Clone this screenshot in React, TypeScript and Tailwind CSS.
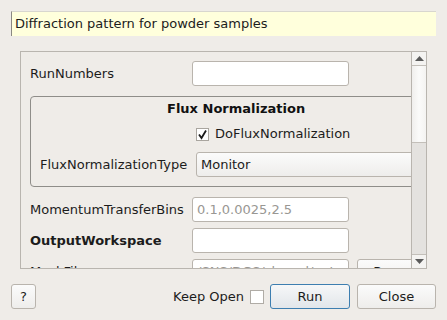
import React from "react";

const font = { fontFamily: '"DejaVu Sans", "Noto Sans", sans-serif' };

function Input({ placeholder }: { placeholder?: string }) {
  return (
    <div className="h-[25px] w-[157px] shrink-0 rounded-[3px] border border-[#b9b4ad] bg-white px-[4px] flex items-center text-[13px] text-[#999793] overflow-hidden whitespace-nowrap">
      {placeholder}
    </div>
  );
}

function Row({ label, bold, children }: { label: string; bold?: boolean; children: React.ReactNode }) {
  return (
    <div className="flex items-center h-[25px]">
      <div className={`w-[162px] shrink-0 text-[13px] text-[#1c1c1c] ${bold ? "font-bold" : ""}`}>{label}</div>
      {children}
    </div>
  );
}

export default function App() {
  return (
    <div style={font} className="w-[447px] h-[320px] bg-[#efece8] relative overflow-hidden text-[#1c1c1c]">
      <div className="pt-[11px] px-[11px]">
        <div className="h-[25px] w-[425px] bg-[#ffffdc] border-l border-l-[#8a8883] border-t border-t-[#d8d6cf] flex items-center pl-[3px] text-[13px]">
          Diffraction pattern for powder samples
        </div>
      </div>
      <div className="mt-[15px] ml-[20px] w-[407px] h-[218px] border border-[#b9b5af] flex overflow-hidden">
        <div className="w-[391px] h-full overflow-hidden">
          <div className="w-[460px] pl-[9px] pt-[9px] flex flex-col">
            <Row label="RunNumbers"><Input /></Row>
            <div className="mt-[10px] w-[417px] h-[91px] border border-[#8f8d89] rounded-[4px] flex flex-col">
              <div className="pl-[136px] pt-[4px] h-[20px] text-[13px] font-bold leading-[16px] text-[#111]">Flux Normalization</div>
              <div className="mt-[10px] ml-[165px] flex items-center h-[14px]">
                <div className="w-[13px] h-[13px] border border-[#a9a59f] bg-white flex items-center justify-center">
                  <svg width="11" height="11" viewBox="0 0 11 11"><path d="M2 5.5 L4.5 9 L9 1.5" stroke="#1a1a1a" strokeWidth="1.8" fill="none" /></svg>
                </div>
                <span className="ml-[6px] text-[13px]">DoFluxNormalization</span>
              </div>
              <div className="mt-[11px] ml-[9px] flex items-center h-[25px]">
                <div className="w-[156px] shrink-0 text-[13px]">FluxNormalizationType</div>
                <div className="h-[25px] w-[240px] rounded-[3px] border border-[#b9b4ad] bg-gradient-to-b from-[#fbfbfb] to-[#eeedeb] flex items-center pl-[4px] text-[13px]">Monitor</div>
              </div>
            </div>
            <div className="mt-[10px] flex flex-col gap-[6px]">
              <Row label="MomentumTransferBins"><Input placeholder="0.1,0.0025,2.5" /></Row>
              <Row label="OutputWorkspace" bold><Input /></Row>
              <Row label="MaskFile">
                <Input placeholder="/SNS/DGS/shared/autoreduce/mask.nxs" />
                <div className="ml-[8px] h-[25px] w-[80px] shrink-0 rounded-[3px] border border-[#b9b4ad] bg-gradient-to-b from-[#fbfbfb] to-[#eeedeb] flex items-center justify-center text-[13px]">Browse</div>
              </Row>
            </div>
          </div>
        </div>
        <div className="w-[15px] h-full border-l border-[#b9b5af] flex flex-col bg-[#e4e2df]">
          <div className="h-[14px] border-b border-[#c3bfb9] bg-[#f4f3f1] flex items-center justify-center">
            <svg width="9" height="5" viewBox="0 0 9 5"><path d="M0 5 L4.5 0 L9 5 Z" fill="#5a5a5a" /></svg>
          </div>
          <div className="h-[77px] border-b border-[#c3bfb9] bg-gradient-to-r from-[#f0efed] via-[#fbfbfa] to-[#f4f3f1]" />
          <div className="flex-1" />
          <div className="h-[14px] border-t border-[#c3bfb9] bg-[#f4f3f1] flex items-center justify-center">
            <svg width="9" height="5" viewBox="0 0 9 5"><path d="M0 0 L4.5 5 L9 0 Z" fill="#5a5a5a" /></svg>
          </div>
        </div>
      </div>
      <div className="mt-[15px] px-[11px] flex items-center h-[25px]">
        <div className="w-[25px] h-[25px] rounded-[3px] border border-[#b9b4ad] bg-gradient-to-b from-[#fbfbfb] to-[#eeedeb] flex items-center justify-center text-[13px]">?</div>
        <div className="flex-1" />
        <span className="text-[13px]">Keep Open</span>
        <div className="ml-[6px] w-[14px] h-[14px] border border-[#b0aca6] bg-white" />
        <div className="ml-[6px] w-[80px] h-[25px] rounded-[3px] border border-[#3d7eb0] bg-gradient-to-b from-[#f6f7f8] to-[#e2e6ea] flex items-center justify-center text-[13px]">Run</div>
        <div className="ml-[7px] w-[79px] h-[25px] rounded-[3px] border border-[#b9b4ad] bg-gradient-to-b from-[#fbfbfb] to-[#eeedeb] flex items-center justify-center text-[13px]">Close</div>
      </div>
    </div>
  );
}
